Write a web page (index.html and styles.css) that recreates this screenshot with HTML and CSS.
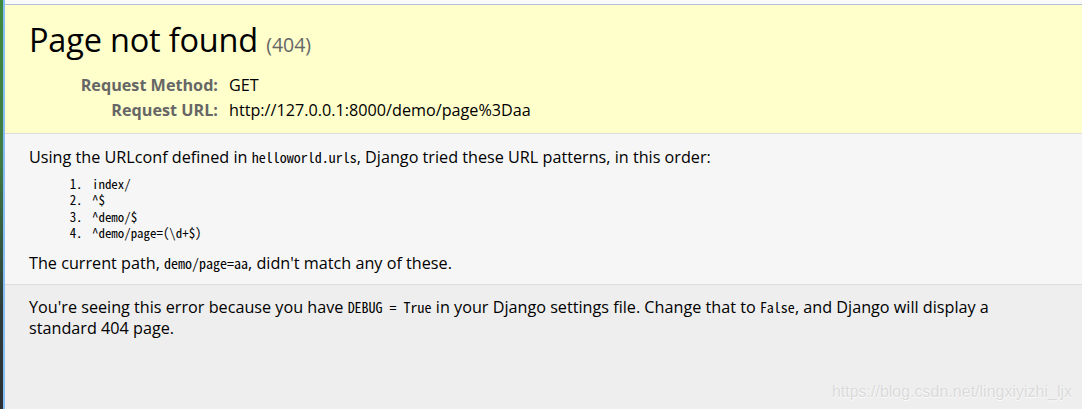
FILE: index.html
```html
<!DOCTYPE html>
<html lang="en">
<head>
<meta charset="utf-8">
<title>Page not found at /demo/page=aa</title>
<link rel="stylesheet" href="styles.css">
</head>
<body>
<div class="frame">
  <div class="edge"></div>
  <div class="page">
    <div class="summary">
      <h1 class="title">Page not found <span class="code-num">(404)</span></h1>
      <table class="req">
        <tr><th>Request Method:</th><td>GET</td></tr>
        <tr><th>Request URL:</th><td>http://127.0.0.1:8000/demo/page%3Daa</td></tr>
      </table>
    </div>
    <div class="info">
      <p class="para">Using the URLconf defined in <code class="mono">helloworld.urls</code>, Django tried these URL patterns, in this order:</p>
      <ol class="patterns">
        <li>index/</li>
        <li>^$</li>
        <li>^demo/$</li>
        <li>^demo/page=(\d+$)</li>
      </ol>
      <p class="para">The current path, <code class="mono">demo/page=aa</code>, didn't match any of these.</p>
    </div>
    <div class="explanation">
      <p class="para expl-text">You're seeing this error because you have <code class="mono">DEBUG = True</code> in your Django settings file. Change that to <code class="mono">False</code>, and Django will display a standard 404 page.</p>
    </div>
  </div>
</div>
<div class="watermark">https://blog.csdn.net/lingxiyizhi_ljx</div>
</body>
</html>
```

FILE: styles.css
```css
* { margin: 0; padding: 0; box-sizing: border-box; }
html, body { height: 100%; }
body {
  font-family: "Open Sans", "Noto Sans", sans-serif;
  font-size: 16.2px;
  color: #000;
  background: #eee;
  overflow: hidden;
}
.frame {
  display: flex;
  height: 100%;
}
.edge {
  width: 5px;
  flex: none;
  background:
    linear-gradient(to right, transparent 3px, #86bdf2 3px, #86bdf2 5px),
    linear-gradient(to bottom, #3f8a3f 0%, #3f7a44 40%, #2f3d3a 75%, #2a2f33 100%);
}
.page {
  flex: 1;
  display: flex;
  flex-direction: column;
  border-top: 4px solid #fafafa;
}
.summary {
  background: #ffc;
  border-bottom: 1px solid #ddd;
  border-top: 1px solid #b4c2d6;
  padding: 15px 23px 10px 24px;
}
.title {
  font-weight: normal;
  font-size: 32.5px;
  line-height: 40px;
  margin-bottom: 8px;
  letter-spacing: -0.2px;
}
.code-num {
  font-size: 19.5px;
  color: #666;
  letter-spacing: 0;
}
.req {
  border-collapse: collapse;
}
.req th, .req td {
  vertical-align: top;
  padding: 2px 3px;
  line-height: 21px;
  font-weight: normal;
}
.req th {
  width: 197px;
  text-align: right;
  color: #666;
  font-weight: bold;
  padding-right: 8px;
}
.info {
  background: #f6f6f6;
  border-bottom: 1px solid #ddd;
  padding: 12px 23px 10px 24px;
}
.para {
  line-height: 22px;
}
.mono {
  font-family: "Noto Sans Mono CJK SC", "Liberation Mono", "DejaVu Sans Mono", monospace;
  font-size: 14px;
}
.patterns {
  margin: 8px 60px 10px 60px;
  font-family: "Noto Sans Mono CJK SC", "Liberation Mono", "DejaVu Sans Mono", monospace;
  font-size: 12.9px;
  line-height: 16.4px;
}
.patterns li {
  padding-left: 3px;
}
.explanation {
  flex: 1;
  background: #eee;
  padding: 12px 23px 11px 24px;
}
.expl-text {
  line-height: 21px;
  max-width: 1000px;
}
.watermark {
  position: absolute;
  right: 10px;
  bottom: 8px;
  font-family: "Liberation Sans", Arial, sans-serif;
  font-size: 16px;
  color: #dadada;
  text-shadow: 0 1px 0 #fbfbfb, 1px 0 0 #f6f6f6;
}
```
